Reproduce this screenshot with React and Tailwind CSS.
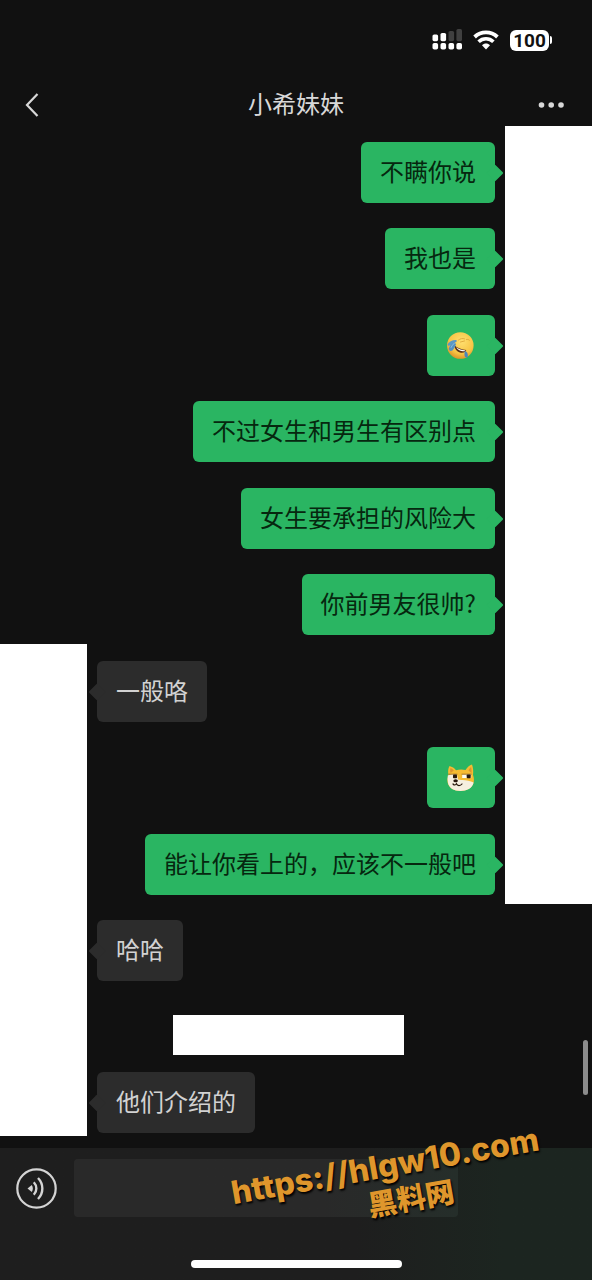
import React, { useState } from 'react';
import clsx from 'clsx';

const MESSAGES = [
  { id: 1, mine: true, text: '不瞒你说' },
  { id: 2, mine: true, text: '我也是' },
  { id: 3, mine: true, emoji: 'facepalm' },
  { id: 4, mine: true, text: '不过女生和男生有区别点' },
  { id: 5, mine: true, text: '女生要承担的风险大' },
  { id: 6, mine: true, text: '你前男友很帅?' },
  { id: 7, mine: false, text: '一般咯' },
  { id: 8, mine: true, emoji: 'doge' },
  { id: 9, mine: true, text: '能让你看上的，应该不一般吧' },
  { id: 10, mine: false, text: '哈哈' },
];

function SignalIcon() {
  return (
    <svg width="30" height="22" viewBox="0 0 30 22" aria-hidden="true">
      <g fill="#fff">
        <rect x="0.500" y="14" width="5.600" height="6.600" rx="1.800" />
        <rect x="8.500" y="14" width="5.600" height="6.600" rx="1.800" />
        <rect x="16.500" y="14" width="5.600" height="6.600" rx="1.800" />
        <rect x="24.400" y="14" width="5.600" height="6.600" rx="1.800" />
        <rect x="0.500" y="5.400" width="5.600" height="6.800" rx="1.600" />
        <rect x="8.500" y="4" width="5.600" height="8.200" rx="1.600" />
      </g>
      <g fill="#404040">
        <rect x="16.500" y="2" width="5.600" height="10.200" rx="1.600" />
        <rect x="24.400" y="0" width="5.600" height="12.200" rx="1.600" />
      </g>
    </svg>
  );
}

function WifiIcon() {
  return (
    <svg width="26" height="20" viewBox="0 0 26 20" fill="none" aria-hidden="true">
      <path d="M1.600 7C8 .9 18 .9 24.400 7" stroke="#fff" strokeWidth="3.800" />
      <path d="M5.600 11.800c4.200-4 10.600-4 14.800 0" stroke="#fff" strokeWidth="3.600" />
      <path d="M9 15.200c2.300-2.200 5.700-2.200 8 0l-4 4.200z" fill="#fff" />
    </svg>
  );
}

function FacepalmEmoji() {
  return (
    <svg className="size-[30px]" viewBox="0 0 30 30" role="img" aria-label="捂脸">
      <defs>
        <radialGradient id="face" cx="0.55" cy="0.35" r="0.7">
          <stop offset="0" stopColor="#ffdf70" />
          <stop offset="0.65" stopColor="#f8c545" />
          <stop offset="1" stopColor="#d98c24" />
        </radialGradient>
      </defs>
      <circle cx="14.300" cy="14.500" r="13.300" fill="url(#face)" />
      <path d="M12.500 9c1.800-1.400 4-1.900 6-1.200M14.500 11l4-1M20.500 8.500c1.200-.3 2.300 0 3 .8" stroke="#e0a63a" strokeWidth="0.900" fill="none" strokeLinecap="round" />
      <path d="M8.500 14.500c3 2.600 7.300 4.200 11.800 4.400-.2 2-3 3.400-6.300 2.600-3.200-.9-5.300-3.500-5.500-7z" fill="#5a2d14" />
      <path d="M10 16.300c2.800 1.900 6 2.900 9.500 3.100-1.400 1.800-7 1.200-9.500-3.100z" fill="#fff" />
      <path d="M7.500 10.800L10 13c-.8 2.800-2.200 5-3.600 6.600-1.600 1-3.200.2-3.700-1.600C3.300 15.500 5 12.700 7.500 10.800z" fill="#5590c0" />
      <path d="M1.500 13.500c1.300-2.600 4.600-4.500 8.200-4.500 1.300.2 1.500 1.500.3 2.100L4 14.600c-1.300.4-2.400 0-2.500-1.100z" fill="#5c98c6" />
      <path d="M5 16.500c.8-1.700 1.900-3.100 3.200-4.200" stroke="#8fc0de" strokeWidth="1" fill="none" strokeLinecap="round" />
      <path d="M19 20c2 .7 3.200 2.300 2.800 6-1.300 1-2.800.4-3.100-.9-.4-1.700-.3-3.600.3-5.100z" fill="#4a86bd" />
    </svg>
  );
}

function DogeEmoji() {
  return (
    <svg className="size-[30px]" viewBox="0 0 30 30" role="img" aria-label="旺柴">
      <path d="M3.500 3c2.500.6 5 2.300 6.500 4.200 3-.9 6.500-1 9.500-.2C21 4.500 23.500 2 26 1.500c1.200 3 1.500 7 1 10.500 1 2.500 1.300 5.500.4 8.300-1.700 5-7 7.700-12.900 7.700-6.500 0-11.500-3-12.800-8-.6-2.800-.2-5.500.8-8C1.800 9 2 5.500 3.500 3z" fill="#f5bb32" />
      <path d="M4.500 5c1.300.4 2.500 1.400 3.300 2.400L4.700 10C4 8.500 4 6.800 4.500 5zM25 4c.6 1.800.8 4 .5 5.900l-3-2.500C23.200 6 24 5 25 4z" fill="#dc9430" />
      <path d="M1.800 12.500c2.800-1.800 6.200-2 9.200-1l1 5 3 .5c4.500-.3 9 1 12.600 2.500-1 5.700-7 8.500-13.100 8.500-6.500 0-11.500-3-12.500-8-.5-2.500-.6-5-.2-7.500z" fill="#f6efdf" />
      <path d="M16.200 11.300h9v3.700h-9z" fill="#fffdf0" />
      <path d="M3 11.200h8M16 11.200h9.200" stroke="#9a6a20" strokeWidth="0.900" strokeLinecap="round" />
      <rect x="7" y="11.400" width="4" height="3.800" rx="0.800" fill="#27180c" />
      <rect x="20.700" y="11.400" width="4" height="3.800" rx="0.800" fill="#27180c" />
      <ellipse cx="9.600" cy="17.800" rx="2.300" ry="1.500" fill="#27180c" />
      <path d="M7 21c1.200 1.400 2.600 1.300 3.400-.2.900 2.300 4 2.300 5.600.2" stroke="#27180c" strokeWidth="1.200" fill="none" strokeLinecap="round" />
    </svg>
  );
}

function Bubble({ message }) {
  const { mine, text, emoji } = message;
  return (
    <div
      className={clsx(
        'relative flex h-[61px] items-center rounded-md px-[19px] text-2xl',
        mine ? 'bg-[#2ab562] text-[#06270f]' : 'bg-[#2c2c2c] text-[#d2d2d2]'
      )}
    >
      <span
        className={clsx(
          'absolute top-1/2 size-3 -translate-y-1/2 rotate-45 rounded-[1px]',
          mine ? '-right-1.5 bg-[#2ab562]' : '-left-1.5 bg-[#2c2c2c]'
        )}
      />
      {emoji === 'facepalm' && <FacepalmEmoji />}
      {emoji === 'doge' && <DogeEmoji />}
      {text && <p className="relative pb-1 whitespace-nowrap">{text}</p>}
    </div>
  );
}

export default function App() {
  const [draft, setDraft] = useState('');

  return (
    <div className="relative flex min-h-screen flex-col overflow-hidden bg-[#111111] font-['Noto_Sans_CJK_SC',sans-serif]">
      {/* Status bar */}
      <div className="flex h-20 items-center justify-end gap-[11px] pr-10">
        <SignalIcon />
        <WifiIcon />
        <div className="flex items-center gap-px">
          <span className="flex h-[21px] w-[39px] items-center justify-center rounded-md bg-white font-['Roboto',sans-serif] text-[19px] leading-none font-bold text-[#111111]">
            100
          </span>
          <span className="h-2 w-0.5 rounded-r-full bg-white" />
        </div>
      </div>

      {/* Header */}
      <header className="grid h-[46px] grid-cols-[1fr_auto_1fr] items-center px-[25px] text-[#d8d8d8]">
        <button type="button" aria-label="返回" className="justify-self-start pt-1">
          <svg width="14" height="26" viewBox="0 0 14 26" fill="none" aria-hidden="true">
            <path d="M12.500 2L2 13l10.500 11" stroke="currentColor" strokeWidth="2.200" />
          </svg>
        </button>
        <h1 className="text-2xl">小希妹妹</h1>
        <button type="button" aria-label="更多" className="justify-self-end pt-1">
          <svg width="30" height="8" viewBox="0 0 30 8" fill="currentColor" aria-hidden="true">
            <circle cx="4.500" cy="4" r="2.800" />
            <circle cx="14.200" cy="4" r="2.800" />
            <circle cx="24" cy="4" r="2.800" />
          </svg>
        </button>
      </header>

      {/* Conversation, with a blank avatar strip on each side */}
      <main className="relative grid flex-1 grid-cols-[87px_1fr_87px]">
        <div className="mt-[518px] mb-3 bg-white" />
        <div className="px-2.5 pt-4 pb-[15px]">
          <ul>
            {MESSAGES.map((message) => (
              <li
                key={message.id}
                className={clsx('mb-[25px] flex even:mb-[26px]', message.mine && 'justify-end')}
              >
                <Bubble message={message} />
              </li>
            ))}
          </ul>
          <div className="mx-auto mt-[34px] mb-[17px] h-10 w-[231px] -translate-x-2 bg-white" />
          <div className="flex">
            <Bubble message={{ mine: false, text: '他们介绍的' }} />
          </div>
        </div>
        <div className="mb-[244px] bg-white" />
        <span className="absolute right-1 bottom-[53px] h-[55px] w-[5px] rounded-full bg-[#8c8c8c]" />
      </main>

      {/* Input bar */}
      <footer className="relative bg-linear-to-r from-[#1e1e1e] from-60% to-[#1c2520] to-85% pt-[11px] pb-3">
        <div className="flex items-center gap-[17px] pr-[134px] pl-4">
          <button type="button" aria-label="语音" className="text-[#d4d4d4]">
            <svg width="41" height="41" viewBox="0 0 41 41" fill="none" stroke="currentColor" strokeWidth="2.200" aria-hidden="true">
              <circle cx="20.500" cy="20.500" r="19.200" />
              <path d="M11.500 20.500l4.300-3.500c1.400 2 1.400 5 0 7z" fill="currentColor" stroke="none" />
              <path d="M17.800 14.200c3.400 3.600 3.400 9 0 12.600M22 10c5.800 6 5.800 15 0 21" strokeWidth="2.400" />
            </svg>
          </button>
          <input
            type="text"
            aria-label="输入消息"
            value={draft}
            onChange={(e) => setDraft(e.target.value)}
            className="h-[58px] min-w-0 flex-1 rounded-sm bg-linear-to-r from-[#292929] from-65% to-[#252e2a] px-3 text-2xl text-[#d2d2d2] outline-none"
          />
        </div>
        <div className="mx-auto mt-[43px] h-2 w-[211px] rounded-full bg-white" />

        {/* Site watermark */}
        <div className="pointer-events-none absolute top-0 right-12 -rotate-10 text-center font-extrabold whitespace-nowrap text-[#df962c] [text-shadow:1px_2px_2px_#000]">
          <p className="font-['Inter',sans-serif] text-[32px] leading-9">https://hlgw10.com</p>
          <p className="pl-10 text-[29px] leading-8 font-black">黑料网</p>
        </div>
      </footer>
    </div>
  );
}
